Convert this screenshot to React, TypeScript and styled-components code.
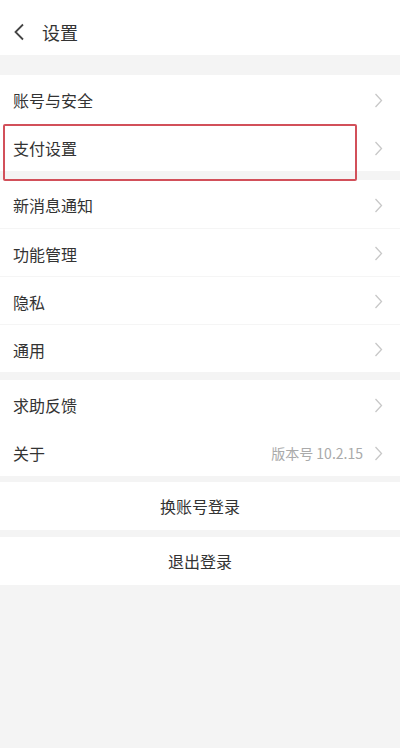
import React from 'react';
import styled, { createGlobalStyle } from 'styled-components';

const GlobalStyle = createGlobalStyle`
  html, body {
    margin: 0;
    padding: 0;
    background: #f4f4f4;
    font-family: "Noto Sans CJK SC", "Noto Sans", sans-serif;
  }
`;

const Page = styled.div`
  width: 400px;
  min-height: 748px;
  background: #f4f4f4;
  overflow: hidden;
`;

const Header = styled.div`
  height: 55px;
  background: #fff;
  display: flex;
  align-items: center;
  padding-left: 13px;
  padding-top: 9px;
  box-sizing: border-box;
`;

const Title = styled.span`
  font-size: 18px;
  color: #333;
  margin-left: 17px;
`;

const Group = styled.div<{ gap: number }>`
  margin-top: ${(p) => p.gap}px;
  background: #fff;
`;

const Row = styled.div<{ divider?: boolean }>`
  position: relative;
  height: 48px;
  display: flex;
  align-items: center;
  padding: 2px 17px 0 13px;
  border-top: ${(p) => (p.divider ? '1px solid #f5f5f5' : 'none')};
  box-sizing: border-box;
`;

const Label = styled.span`
  flex: 1;
  font-size: 16px;
  color: #333;
`;

const Extra = styled.span`
  font-size: 14px;
  color: #aaa;
  margin-right: 11px;
`;

const CenterRow = styled.div`
  height: 48px;
  display: flex;
  align-items: center;
  justify-content: center;
  font-size: 16px;
  color: #333;
`;

const Highlight = styled.div`
  position: absolute;
  top: 1px;
  left: 3px;
  width: 354px;
  height: 57px;
  border: 2px solid #d2505a;
  border-radius: 2px;
  box-sizing: border-box;
  z-index: 2;
`;

function Chevron() {
  return (
    <svg width="9" height="15" viewBox="0 0 9 15" fill="none">
      <path d="M1.5 1 L7.5 7.5 L1.5 14" stroke="#c8c8c8" strokeWidth="1.3" />
    </svg>
  );
}

function Back() {
  return (
    <svg width="12" height="18" viewBox="0 0 12 18" fill="none">
      <path d="M10 1.5 L2.5 9 L10 16.5" stroke="#444" strokeWidth="1.8" />
    </svg>
  );
}

interface ItemProps {
  label: string;
  extra?: string;
  divider?: boolean;
  marked?: boolean;
}

function Item(props: ItemProps) {
  return (
    <Row divider={props.divider}>
      <Label>{props.label}</Label>
      {props.extra && <Extra>{props.extra}</Extra>}
      <Chevron />
      {props.marked && <Highlight />}
    </Row>
  );
}

export default function App() {
  return (
    <Page>
      <GlobalStyle />
      <Header>
        <Back />
        <Title>设置</Title>
      </Header>
      <Group gap={20}>
        <Item label="账号与安全" />
        <Item label="支付设置" marked />
      </Group>
      <Group gap={9}>
        <Item label="新消息通知" />
        <Item label="功能管理" divider />
        <Item label="隐私" divider />
        <Item label="通用" divider />
      </Group>
      <Group gap={8}>
        <Item label="求助反馈" />
        <Item label="关于" extra="版本号 10.2.15" />
      </Group>
      <Group gap={6}>
        <CenterRow>换账号登录</CenterRow>
      </Group>
      <Group gap={7}>
        <CenterRow>退出登录</CenterRow>
      </Group>
    </Page>
  );
}
